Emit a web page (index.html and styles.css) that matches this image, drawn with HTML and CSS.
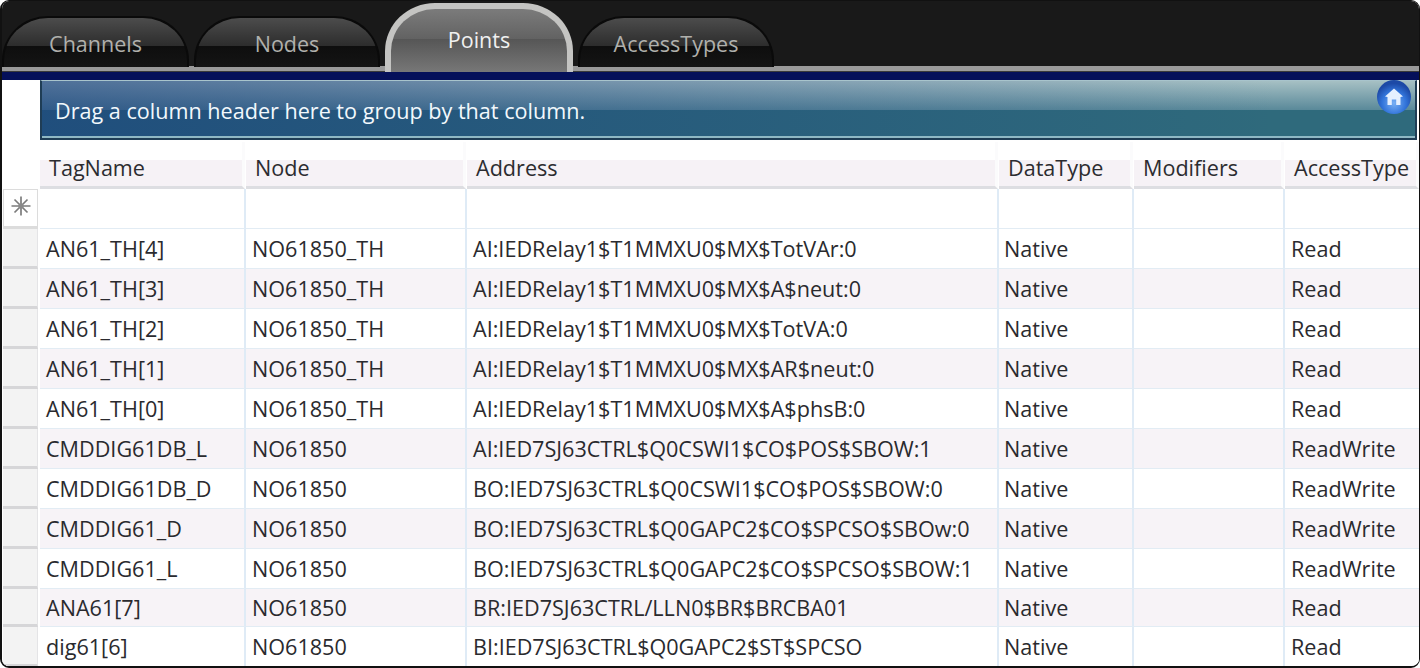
FILE: index.html
```html
<!DOCTYPE html>
<html lang="en">
<head>
<meta charset="utf-8">
<title>Points</title>
<link rel="stylesheet" href="styles.css">
</head>
<body>
<div class="window">
  <div class="tabstrip">
    <div class="tab first">Channels</div>
    <div class="tab">Nodes</div>
    <div class="tab active">Points</div>
    <div class="tab wide">AccessTypes</div>
  </div>
  <div class="navy"></div>
  <div class="content">
    <div class="group-row">
      <div class="gutter"></div>
      <div class="group-panel">
        <span>Drag a column header here to group by that column.</span>
        <svg class="home" width="36" height="36" viewBox="0 0 36 36" aria-hidden="true">
          <defs>
            <radialGradient id="orb" cx="50%" cy="68%" r="58%">
              <stop offset="0" stop-color="#79b0f5"/>
              <stop offset="0.6" stop-color="#3274da"/>
              <stop offset="1" stop-color="#1c49a6"/>
            </radialGradient>
          </defs>
          <circle cx="18" cy="18" r="17" fill="url(#orb)"/>
          <path d="M18 9.5 L27 17.5 L24.5 18 L24.5 26 L20.2 26 L20.2 20.5 L15.8 20.5 L15.8 26 L11.5 26 L11.5 18 L9 17.5 Z" fill="#e6f0ff"/>
        </svg>
      </div>
    </div>
    <div class="row head">
      <div class="rh blank"></div>
      <div class="hc">TagName</div>
      <div class="hc">Node</div>
      <div class="hc">Address</div>
      <div class="hc">DataType</div>
      <div class="hc">Modifiers</div>
      <div class="hc">AccessType</div>
    </div>
    <div class="row new">
      <div class="rh star">
        <svg width="22" height="22" viewBox="0 0 22 22" aria-hidden="true">
          <path d="M11 1.5 V20.5 M1.5 11 H20.5 M4.5 4.5 L17.5 17.5 M17.5 4.5 L4.5 17.5" stroke="#7c7c7c" stroke-width="1.7" fill="none"/>
          <circle cx="11" cy="11" r="2.6" fill="#8a8a8a"/>
        </svg>
      </div>
      <div class="c"></div><div class="c"></div><div class="c"></div><div class="c"></div><div class="c"></div><div class="c"></div>
    </div>
    <div class="row">
      <div class="rh"></div><div class="c">AN61_TH[4]</div><div class="c">NO61850_TH</div><div class="c">AI:IEDRelay1$T1MMXU0$MX$TotVAr:0</div><div class="c">Native</div><div class="c"></div><div class="c">Read</div>
    </div>
    <div class="row alt">
      <div class="rh"></div><div class="c">AN61_TH[3]</div><div class="c">NO61850_TH</div><div class="c">AI:IEDRelay1$T1MMXU0$MX$A$neut:0</div><div class="c">Native</div><div class="c"></div><div class="c">Read</div>
    </div>
    <div class="row">
      <div class="rh"></div><div class="c">AN61_TH[2]</div><div class="c">NO61850_TH</div><div class="c">AI:IEDRelay1$T1MMXU0$MX$TotVA:0</div><div class="c">Native</div><div class="c"></div><div class="c">Read</div>
    </div>
    <div class="row alt">
      <div class="rh"></div><div class="c">AN61_TH[1]</div><div class="c">NO61850_TH</div><div class="c">AI:IEDRelay1$T1MMXU0$MX$AR$neut:0</div><div class="c">Native</div><div class="c"></div><div class="c">Read</div>
    </div>
    <div class="row">
      <div class="rh"></div><div class="c">AN61_TH[0]</div><div class="c">NO61850_TH</div><div class="c">AI:IEDRelay1$T1MMXU0$MX$A$phsB:0</div><div class="c">Native</div><div class="c"></div><div class="c">Read</div>
    </div>
    <div class="row alt">
      <div class="rh"></div><div class="c">CMDDIG61DB_L</div><div class="c">NO61850</div><div class="c">AI:IED7SJ63CTRL$Q0CSWI1$CO$POS$SBOW:1</div><div class="c">Native</div><div class="c"></div><div class="c">ReadWrite</div>
    </div>
    <div class="row">
      <div class="rh"></div><div class="c">CMDDIG61DB_D</div><div class="c">NO61850</div><div class="c">BO:IED7SJ63CTRL$Q0CSWI1$CO$POS$SBOW:0</div><div class="c">Native</div><div class="c"></div><div class="c">ReadWrite</div>
    </div>
    <div class="row alt">
      <div class="rh"></div><div class="c">CMDDIG61_D</div><div class="c">NO61850</div><div class="c">BO:IED7SJ63CTRL$Q0GAPC2$CO$SPCSO$SBOw:0</div><div class="c">Native</div><div class="c"></div><div class="c">ReadWrite</div>
    </div>
    <div class="row">
      <div class="rh"></div><div class="c">CMDDIG61_L</div><div class="c">NO61850</div><div class="c">BO:IED7SJ63CTRL$Q0GAPC2$CO$SPCSO$SBOW:1</div><div class="c">Native</div><div class="c"></div><div class="c">ReadWrite</div>
    </div>
    <div class="row alt short">
      <div class="rh"></div><div class="c">ANA61[7]</div><div class="c">NO61850</div><div class="c">BR:IED7SJ63CTRL/LLN0$BR$BRCBA01</div><div class="c">Native</div><div class="c"></div><div class="c">Read</div>
    </div>
    <div class="row">
      <div class="rh"></div><div class="c">dig61[6]</div><div class="c">NO61850</div><div class="c">BI:IED7SJ63CTRL$Q0GAPC2$ST$SPCSO</div><div class="c">Native</div><div class="c"></div><div class="c">Read</div>
    </div>
  </div>
</div>
</body>
</html>
```
FILE: styles.css
```css
* { box-sizing: border-box; }
html, body { margin: 0; padding: 0; background: #fff; }
body { width: 1420px; height: 668px; overflow: hidden; font-family: "Open Sans", "Noto Sans", sans-serif; }

.window {
  width: 1420px;
  height: 668px;
  display: flex;
  flex-direction: column;
  overflow: hidden;
  background: #fff;
  border: 1px solid #111;
  border-width: 1px 1px 2px 2px;
  border-radius: 9px;
}

.tabstrip {
  height: 71px;
  flex: none;
  display: flex;
  align-items: flex-end;
  gap: 5px;
  background: linear-gradient(#191919 0, #191919 65px, #9a9a9a 65px, #9a9a9a 70px, #3a3a3a 70px);
}

.tab {
  width: 186px;
  height: 51px;
  margin-bottom: 5px;
  padding-top: 12px;
  text-align: center;
  font-size: 21.5px;
  line-height: 28px;
  color: #b0b0ac;
  border: 2px solid #0a0a0a;
  border-bottom: 0;
  border-radius: 46px 46px 0 0 / 44px 44px 0 0;
  background: linear-gradient(#4c4c4c 0, #2c2c2c 58%, #0e0e0e 58%, #141414 100%);
}

.tab.first { width: 187px; }
.tab.wide { width: 196px; }

.tab.active {
  width: 188px;
  height: 69px;
  margin-bottom: 0;
  padding-top: 17px;
  color: #f0f0f0;
  border: 6px solid #c4c4c2;
  border-bottom: 0;
  border-radius: 50px 50px 0 0 / 48px 48px 0 0;
  background: linear-gradient(#7b7b7b 0, #626262 48%, #565656 48%, #777 100%);
}

.navy { height: 8px; flex: none; background: #05105a; }

.content { flex: 1; min-height: 0; background: #fff; }

.group-row { display: flex; height: 62px; }
.gutter { width: 38px; flex: none; }
.group-panel {
  position: relative;
  flex: 1;
  height: 60px;
  margin-right: 2px;
  padding: 1px 13px 0;
  display: flex;
  align-items: center;
  font-size: 21.6px;
  color: #f2f8fc;
  border: 2px solid #1f3d55;
  border-top: 1px solid #a8c4cc;
  box-shadow: inset 0 -2px 0 #8fb8c4;
  background: linear-gradient(90deg, rgba(22,60,125,.6), rgba(40,110,120,0) 90%), linear-gradient(#a6c0c4 0, #5b8a9a 50%, #2f6a7c 50%, #2f6a7c 100%);
}

.home { position: absolute; top: -2px; right: 3px; }

.row {
  display: grid;
  grid-template-columns: 38px 206px 221px 532px 135px 151px 135px;
  height: 40px;
}
.row.short { height: 38px; }

.rh {
  margin-left: 1px;
  margin-right: 2px;
  background: #f3f3f3;
  border-bottom: 3px solid #d6d6d8;
  border-right: 1px solid #e4e4e6;
}
.rh.blank { background: #fff; border: 0; }
.rh.star {
  display: flex;
  align-items: center;
  justify-content: center;
  padding-bottom: 4px;
  background: #fff;
  border: 1px solid #dcdcdc;
  border-bottom: 3px solid #dcdcdc;
}

.head { height: 47px; }
.hc {
  padding: 10px 0 0 9px;
  margin-right: 1px;
  font-size: 21.6px;
  line-height: 32px;
  color: #2c2c30;
  background: linear-gradient(#fff 18px, #f6f2f6 18px);
  border-right: 3px solid #fbfbfc;
  border-bottom: 3px solid #dddee2;
}

.c {
  padding-left: 6px;
  font-size: 21.6px;
  line-height: 40px;
  color: #2a2a2e;
  white-space: nowrap;
  overflow: hidden;
  border-right: 2px solid #dfebf6;
  border-bottom: 1px solid #e2ecf4;
}
.c:nth-child(5) { padding-left: 5px; }
.row.short .c { line-height: 37px; }
.row.alt .c { background: #f7f3f7; }
.row .c:last-child { border-right: 0; }
```
